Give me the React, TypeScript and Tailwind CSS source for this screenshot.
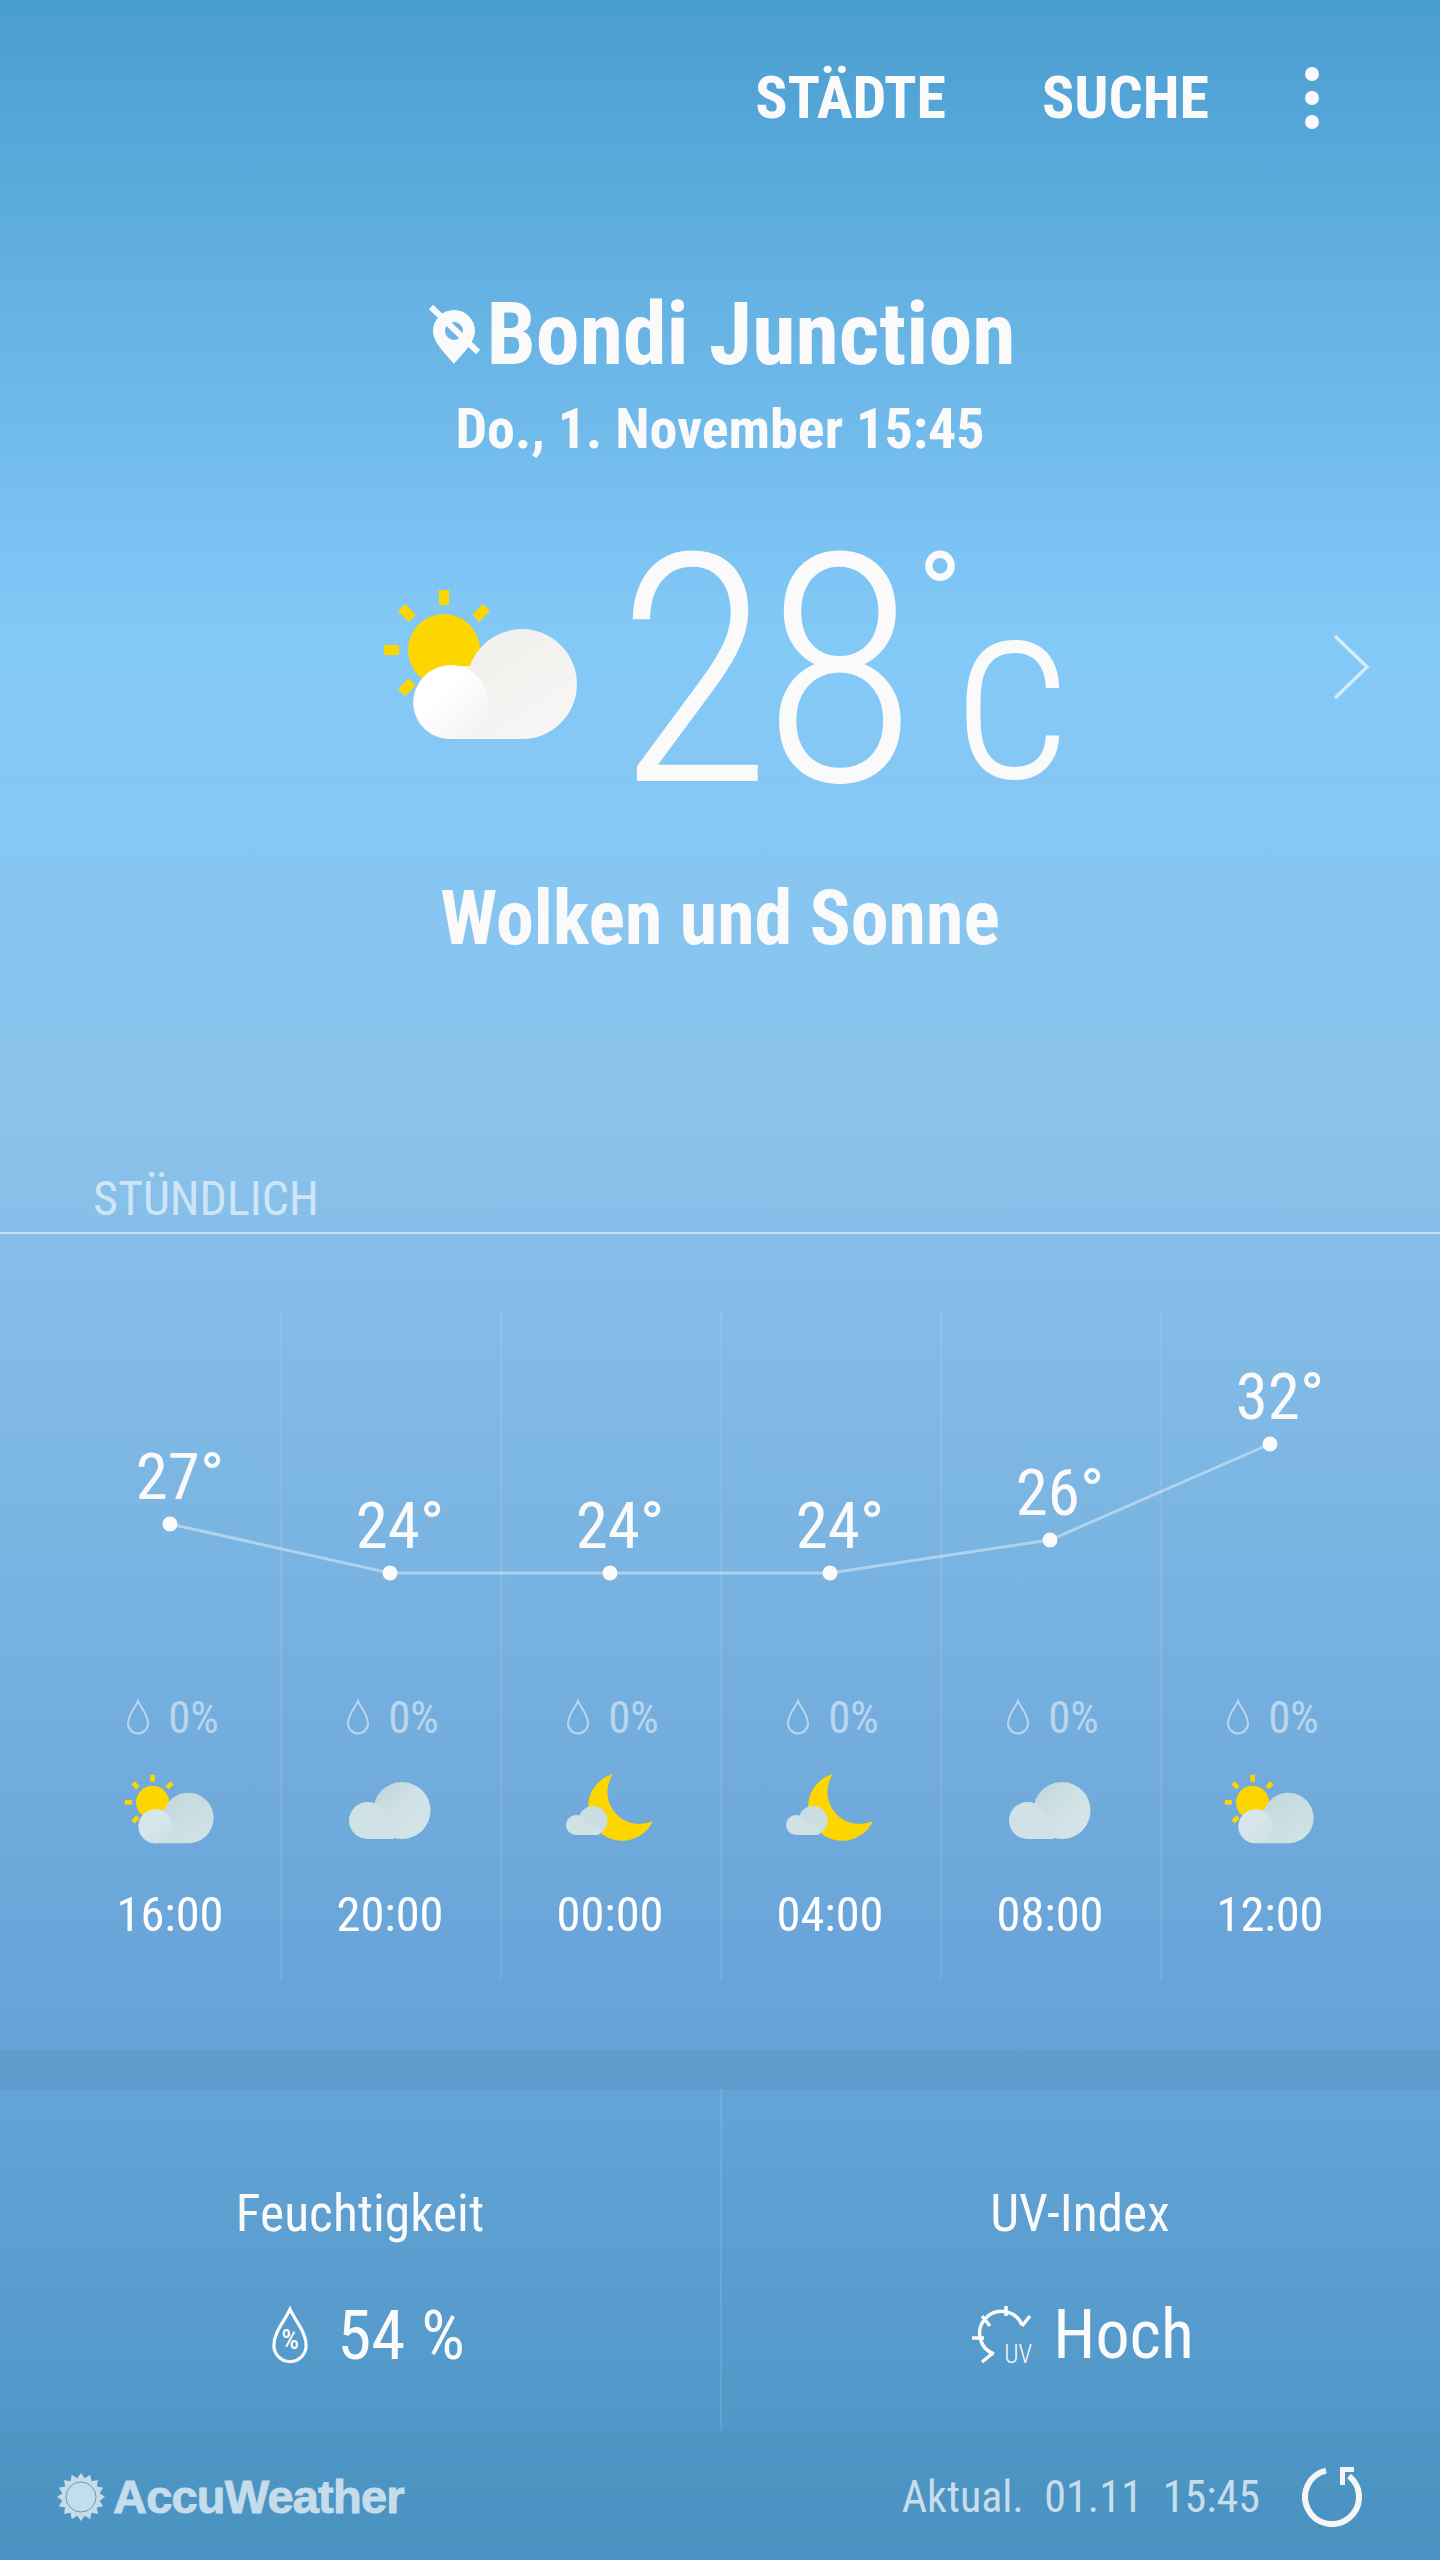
import React from 'react';

const hours = [
  { temp: 27, y: 212, time: '16:00', icon: 'sun' },
  { temp: 24, y: 261, time: '20:00', icon: 'cloud' },
  { temp: 24, y: 261, time: '00:00', icon: 'moon' },
  { temp: 24, y: 261, time: '04:00', icon: 'moon' },
  { temp: 26, y: 228, time: '08:00', icon: 'cloud' },
  { temp: 32, y: 132, time: '12:00', icon: 'sun' },
];

function SunCloud({ big, id }: { big?: boolean; id: string }) {
  const back = big ? ['#eeedea', '#f8f7f5'] : ['#bfd5da', '#d3e4e8'];
  const front = big ? ['#ffffff', '#f4f3f1'] : ['#d6e6ea', '#cfe1e5'];
  return (
    <svg viewBox="0 0 196 149" className={big ? 'w-[196px] h-[149px]' : 'w-[90px] h-[72px]'}>
      <defs>
        <linearGradient id={id + 'a'} x1="0" y1="0" x2="1" y2="1">
          <stop offset="0" stopColor={back[0]} />
          <stop offset="1" stopColor={back[1]} />
        </linearGradient>
        <linearGradient id={id + 'b'} x1="0" y1="0" x2="1" y2="1">
          <stop offset="0.4" stopColor={front[0]} />
          <stop offset="0.9" stopColor={front[1]} />
        </linearGradient>
      </defs>
      <circle cx="60" cy="60" r="36" fill="#fdd600" />
      <g fill="#fdd600">
        <rect x="55" y="0" width="10" height="15" />
        <rect x="55" y="0" width="10" height="15" transform="rotate(45 60 60)" />
        <rect x="55" y="0" width="10" height="15" transform="rotate(-45 60 60)" />
        <rect x="55" y="0" width="10" height="15" transform="rotate(-90 60 60)" />
        <rect x="55" y="0" width="10" height="15" transform="rotate(-135 60 60)" />
      </g>
      <path d="M67 149a36.500 36.500 0 0 1-3-73l22 0a55 55 0 1 1 55 73z" fill={`url(#${id}a)`} />
      <circle cx="67" cy="112" r="37" fill={`url(#${id}b)`} />
    </svg>
  );
}

function CloudIcon() {
  return (
    <svg viewBox="0 0 82 57" className="w-[82px] h-[57px] mt-[9px]">
      <defs>
        <linearGradient id="cl" x1="0" y1="0" x2="1" y2="1">
          <stop offset="0" stopColor="#bdd4d9" />
          <stop offset="0.5" stopColor="#d1e2e6" />
          <stop offset="1" stopColor="#d4e5e8" />
        </linearGradient>
      </defs>
      <circle cx="53" cy="28.500" r="28.500" fill="url(#cl)" />
      <circle cx="18.500" cy="38.500" r="18.500" fill="#d1e2e6" />
      <rect x="18" y="40" width="27" height="17" fill="#d1e2e6" />
    </svg>
  );
}

function MoonIcon() {
  return (
    <svg viewBox="0 0 90 68" className="w-[90px] h-[68px]">
      <path d="M48 1A34 34 0 1 0 88 48A32 32 0 0 1 48 1Z" fill="#fdd600" />
      <circle cx="28" cy="47.500" r="14.500" fill="#cadde1" />
      <circle cx="11" cy="52" r="10" fill="#d1e2e6" />
      <rect x="11" y="52" width="24" height="10" rx="3" fill="#d1e2e6" />
    </svg>
  );
}

function Drop({ className }: { className: string }) {
  return (
    <svg viewBox="0 0 24 36" className={className} fill="none" stroke="currentColor" strokeWidth="2">
      <path d="M12 2C9 9 2 16 2 24.500a10 10 0 0 0 20 0C22 16 15 9 12 2Z" />
    </svg>
  );
}

function AccuLogo() {
  const pts = Array.from({ length: 32 }, (_, i) => {
    const a = (i * Math.PI) / 16;
    const r = i % 2 === 0 ? 24 : 19;
    return `${24 + r * Math.sin(a)},${24 - r * Math.cos(a)}`;
  }).join(' ');
  return (
    <svg viewBox="0 0 48 48" className="w-[48px] h-[48px]">
      <polygon points={pts} fill="#c5dcea" />
      <circle cx="24" cy="24" r="15" fill="none" stroke="#5a9ec9" strokeWidth="1" />
    </svg>
  );
}

export default function App() {
  return (
    <div className="w-[1440px] h-[2560px] overflow-hidden flex flex-col text-[#fafafa] [font-family:Roboto,sans-serif] [font-stretch:75%] bg-[linear-gradient(180deg,#4a9dd1_0px,#5cabdd_200px,#83c9f8_640px,#8ac3eb_1100px,#76b0df_1660px,#68a4d8_1980px,#64a3d6_2100px,#5098c7_2432px,#4b93c2_2560px)]">
      {/* Top actions */}
      <div className="h-[196px] shrink-0 flex items-center justify-end font-bold text-[60px] leading-none pr-[121px]">
        <span className="mr-[96px]">STÄDTE</span>
        <span className="mr-[96px]">SUCHE</span>
        <div className="flex flex-col gap-[10px]">
          <div className="w-[14px] h-[14px] rounded-full bg-[#fafafa]" />
          <div className="w-[14px] h-[14px] rounded-full bg-[#fafafa]" />
          <div className="w-[14px] h-[14px] rounded-full bg-[#fafafa]" />
        </div>
      </div>

      {/* Location */}
      <div className="h-[96px] mt-[90px] shrink-0 flex items-center justify-center font-bold text-[88px] leading-none pl-[2px]">
        <svg viewBox="0 0 54 60" className="w-[54px] h-[60px] mr-[6px]">
          <path fillRule="evenodd" d="M27 6a21 21 0 0 1 21 21c0 12-14 24-21 33C20 51 6 39 6 27A21 21 0 0 1 27 6Zm0 12a9 9 0 1 0 0 18a9 9 0 0 0 0-18Z" fill="#fafafa" />
          <line x1="4" y1="3" x2="51" y2="48" stroke="#fafafa" strokeWidth="6" />
        </svg>
        <span>Bondi Junction</span>
      </div>
      <div className="h-[60px] mt-[17px] shrink-0 text-center font-bold text-[56px] leading-[60px]">Do., 1. November 15:45</div>

      {/* Current temperature */}
      <div className="relative h-[270px] mt-[73px] shrink-0 flex items-center justify-center">
        <div className="flex items-end mt-[10px] pl-[14px]">
          <div className="mr-[36px] mb-[68px]">
            <SunCloud big id="main" />
          </div>
          <div className="flex items-start font-[280] text-[320px] leading-[270px] tracking-[-10px]">
            <span>28</span>
            <span className="font-normal text-[120px] leading-[100px] mt-[10px] ml-[10px] tracking-normal">°</span>
          </div>
          <span className="font-[280] text-[255px] leading-[234px] -ml-[8px]">c</span>
        </div>
        <svg viewBox="0 0 36 66" className="absolute left-[1333px] top-[102px] w-[36px] h-[66px]" fill="none" stroke="#fafafa" strokeOpacity="0.7" strokeWidth="3.500">
          <path d="M2 2l32 31L2 64" />
        </svg>
      </div>

      <div className="h-[90px] mt-[71px] shrink-0 text-center font-bold text-[76px] leading-[90px]">Wolken und Sonne</div>

      {/* Hourly */}
      <div className="h-[63px] mt-[206px] shrink-0 pl-[93px] text-[48px] leading-[60px] text-white/60">STÜNDLICH</div>
      <div className="h-[2px] bg-white/50 shrink-0" />

      <div className="relative mt-[78px] h-[667px] shrink-0 mx-[60px] grid grid-cols-6">
        {hours.map((h, i) => (
          <div key={h.time} className={i === 0 ? 'flex flex-col items-center' : 'flex flex-col items-center border-l-2 border-white/10 pr-[2px]'}>
            <div className="relative h-[370px] w-full">
              <div className="absolute left-0 right-0 pl-[20px] text-center text-[65px] leading-none" style={{ top: h.y - 79 }}>
                {h.temp}°
              </div>
            </div>
            <div className="h-[40px] mt-[15px] pl-[5px] flex items-center gap-[18px] text-[45px] leading-none text-white/50">
              <Drop className="w-[24px] h-[36px]" />
              <span>0%</span>
            </div>
            <div className="h-[74px] mt-[36px] flex items-start justify-center">
              {h.icon === 'sun' && <SunCloud id={'s' + i} />}
              {h.icon === 'cloud' && <CloudIcon />}
              {h.icon === 'moon' && <MoonIcon />}
            </div>
            <div className="h-[60px] mt-[38px] text-[48.500px] leading-[60px] text-white">{h.time}</div>
          </div>
        ))}
        <svg viewBox="0 0 1320 370" className="absolute left-0 top-0 w-[1320px] h-[370px] pointer-events-none">
          <polyline points={hours.map((h, i) => `${110 + i * 220},${h.y}`).join(' ')} fill="none" stroke="#ffffff" strokeOpacity="0.4" strokeWidth="3" />
          {hours.map((h, i) => (
            <circle key={h.time} cx={110 + i * 220} cy={h.y} r="7.500" fill="#fafafa" />
          ))}
        </svg>
      </div>

      <div className="h-[40px] mt-[70px] shrink-0 bg-[#5b93c4]/50" />

      {/* Humidity / UV */}
      <div className="h-[342px] shrink-0 grid grid-cols-2">
        <div className="flex flex-col items-center">
          <div className="h-[60px] mt-[95px] text-[51.500px] leading-[60px]">Feuchtigkeit</div>
          <div className="h-[70px] mt-[56px] flex items-center gap-[26px] text-[69px] leading-none pl-[14px]">
            <div className="relative w-[42px] h-[58px] text-[#fafafa]">
              <Drop className="w-[42px] h-[58px]" />
              <span className="absolute inset-x-0 top-[20px] text-center text-[28px] font-medium leading-none">%</span>
            </div>
            <span>54 %</span>
          </div>
        </div>
        <div className="flex flex-col items-center border-l-2 border-white/10 pr-[2px]">
          <div className="h-[60px] mt-[95px] text-[51.500px] leading-[60px]">UV-Index</div>
          <div className="h-[70px] mt-[56px] pl-[6px] flex items-center gap-[15px] text-[68px] leading-none">
            <div className="relative w-[66px] h-[60px]">
              <svg viewBox="0 0 66 60" className="w-[66px] h-[60px]" fill="none" stroke="#fafafa" strokeWidth="3.500">
                <path d="M50 20A22 22 0 1 0 22 49M34 1v10M10 11l8 10M58 11l-8 10M0 33h12M10 57l11-9" />
              </svg>
              <span className="absolute left-[32px] top-[37px] text-[25px] font-light leading-none">UV</span>
            </div>
            <span>Hoch</span>
          </div>
        </div>
      </div>

      {/* Footer */}
      <div className="flex-1 bg-[#4a92c0]/50 flex items-center pl-[57px] pr-[78px] pt-[2px]">
        <AccuLogo />
        <span className="ml-[8px] [font-family:'Liberation_Sans',sans-serif] [font-stretch:100%] font-bold text-[47px] tracking-[-0.800px] leading-none text-[#c5dcea] [-webkit-text-stroke:1px_#c5dcea]">AccuWeather</span>
        <span className="ml-auto text-[44px] leading-none text-white/70 whitespace-pre">Aktual.  01.11  15:45</span>
        <svg viewBox="0 0 60 60" className="w-[60px] h-[60px] ml-[42px]" fill="none" stroke="#f5f5f5" strokeWidth="6">
          <path d="M24 3.700A27 27 0 1 0 47 9" />
          <path d="M38 0h14v5h-9v13h-5z" fill="#f5f5f5" stroke="none" />
        </svg>
      </div>
    </div>
  );
}
